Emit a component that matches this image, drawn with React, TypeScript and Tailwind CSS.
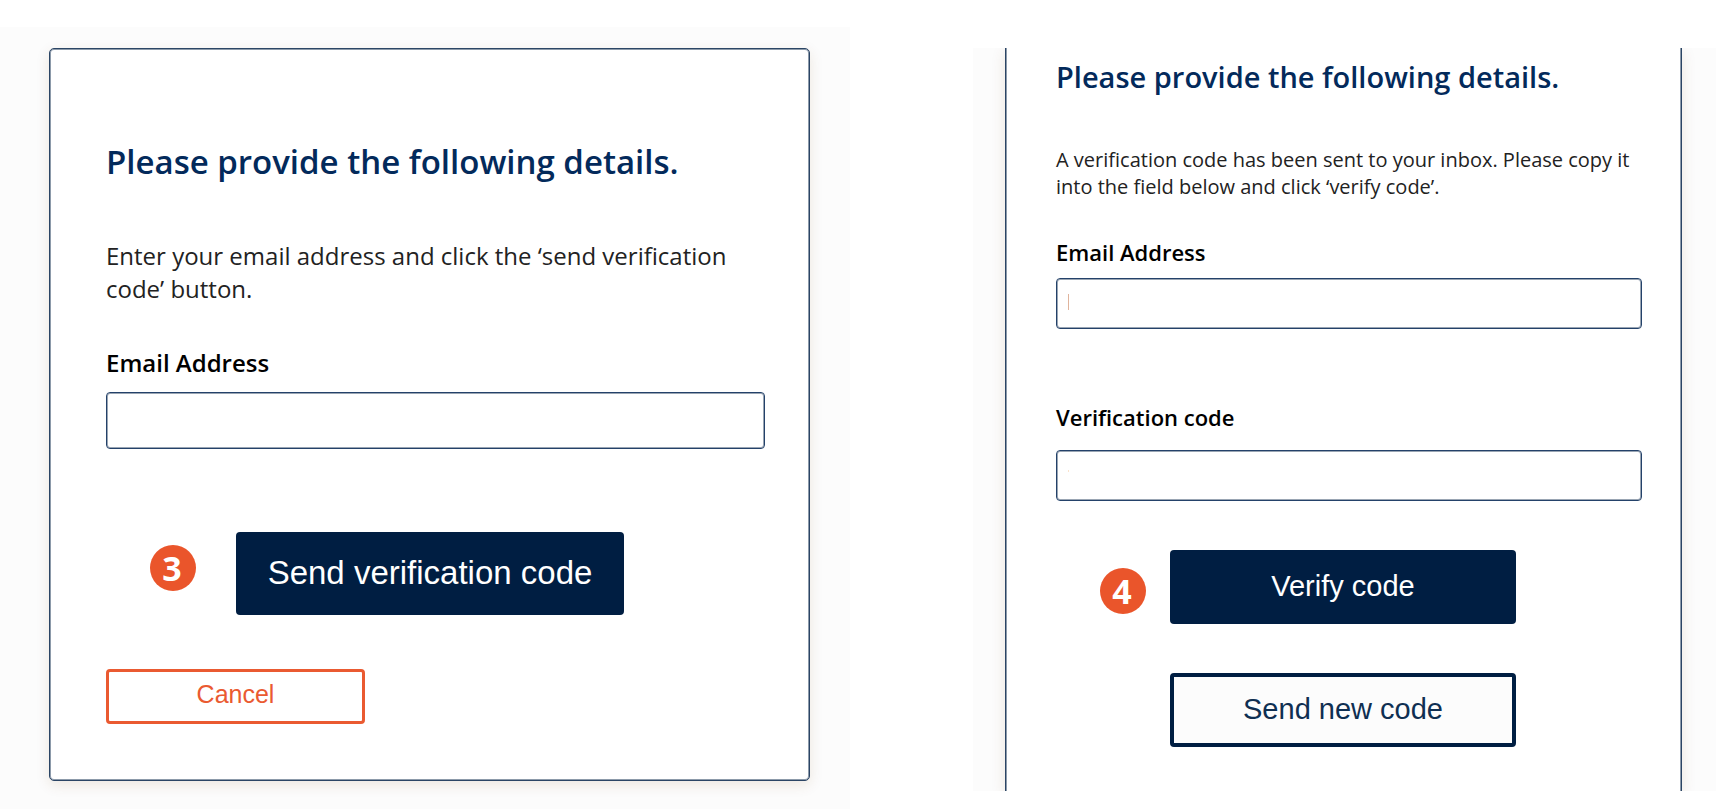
import type { ReactNode } from "react";

const buttonBase = "rounded-[4px] font-['Liberation_Sans',Arial,sans-serif] text-center cursor-pointer";

const inputBase =
  "block w-full rounded-[4px] border border-[#24426a] bg-white px-3 shadow-[inset_0_0_0_1px_rgba(0,30,66,0.4)] outline-none";

function StepBadge({ children }: { children: ReactNode }) {
  return (
    <span className="flex size-[46px] shrink-0 items-center justify-center rounded-full bg-[#ea552b] pr-0.5 text-[34px] leading-none font-bold text-white">
      {children}
    </span>
  );
}

function SendCodePanel() {
  return (
    <section className="bg-[#fcfcfc] pt-[21px] pr-10 pb-7 pl-[49px]">
      <form
        className="rounded-[5px] border border-[#2b4565] bg-white pt-[91px] pr-11 pb-14 pl-14 shadow-[inset_0_0_0_1px_rgba(0,30,66,0.45),0_4px_14px_rgba(120,70,20,0.12)]"
        onSubmit={(event) => event.preventDefault()}
      >
        <h1 className="text-[33px] leading-[44px] font-semibold text-[#032a5b]">
          Please provide the following details.
        </h1>
        <p className="mt-[55px] text-[24px] leading-[33px] text-[#222222]">
          Enter your email address and click the ‘send verification code’ button.
        </p>
        <label htmlFor="send-email" className="mt-[41px] block text-[24px] leading-[33px] font-semibold text-black">
          Email Address
        </label>
        <input id="send-email" type="email" className={`${inputBase} mt-[13px] h-[57px] text-[24px]`} />
        <div className="mt-[83px] flex items-start pl-11">
          <div className="mt-[13px] mr-10 flex">
            <StepBadge>3</StepBadge>
          </div>
          <button type="submit" className={`${buttonBase} h-[83px] w-[388px] bg-[#001e42] pb-0.5 text-[33px] text-white`}>
            Send verification code
          </button>
        </div>
        <button
          type="button"
          className={`${buttonBase} mt-[54px] block h-[55px] w-[259px] border-3 border-[#ea5a31] bg-white pb-1 text-[25px] text-[#ea5a31]`}
        >
          Cancel
        </button>
      </form>
    </section>
  );
}

function VerifyCodePanel() {
  return (
    <section className="overflow-hidden bg-[#fcfcfc] pr-[34px] pl-8">
      <form
        className="border-x border-[#2b4565] bg-white pt-[9px] pr-[39px] pb-11 pl-[50px] shadow-[inset_1px_0_0_rgba(0,30,66,0.45),inset_-1px_0_0_rgba(0,30,66,0.45),0_4px_14px_rgba(120,70,20,0.12)]"
        onSubmit={(event) => event.preventDefault()}
      >
        <h2 className="text-[29px] leading-10 font-semibold text-[#032a5b]">Please provide the following details.</h2>
        <p className="mt-[49px] text-[20px] leading-[27px] text-[#222222]">
          A verification code has been sent to your inbox. Please copy it into the field below and click ‘verify code’.
        </p>
        <label htmlFor="verify-email" className="mt-[37px] block text-[22px] leading-[30px] font-semibold text-black">
          Email Address
        </label>
        <div className="relative mt-[11px]">
          <input id="verify-email" type="email" className={`${inputBase} h-[51px] text-[21px]`} />
          <span aria-hidden="true" className="absolute top-4 left-3 h-4 w-px bg-[#e0b49c]" />
        </div>
        <label htmlFor="verify-code" className="mt-[73px] block text-[22px] leading-[30px] font-semibold text-black">
          Verification code
        </label>
        <div className="relative mt-[18px]">
          <input id="verify-code" type="text" className={`${inputBase} h-[51px] text-[21px]`} />
          <span aria-hidden="true" className="absolute top-5 left-3 h-0.5 w-px bg-[#fbe3cc]" />
        </div>
        <div className="mt-[49px] flex items-start pl-11">
          <div className="mt-[18px] mr-6 flex">
            <StepBadge>4</StepBadge>
          </div>
          <div className="flex flex-col gap-[49px]">
            <button type="submit" className={`${buttonBase} h-[74px] w-[346px] bg-[#001e42] text-[29px] text-white`}>
              Verify code
            </button>
            <button
              type="button"
              className={`${buttonBase} h-[74px] w-[346px] border-4 border-[#001e42] bg-[#fcfcfc] text-[29px] text-[#0f2f52]`}
            >
              Send new code
            </button>
          </div>
        </div>
      </form>
    </section>
  );
}

export default function App() {
  return (
    <main className="grid min-h-screen grid-cols-[850fr_743fr] items-start gap-x-[123px] bg-white pt-[27px] pr-[17px] font-['Open_Sans','Noto_Sans',sans-serif]">
      <SendCodePanel />
      <div className="pt-[21px]">
        <VerifyCodePanel />
      </div>
    </main>
  );
}
